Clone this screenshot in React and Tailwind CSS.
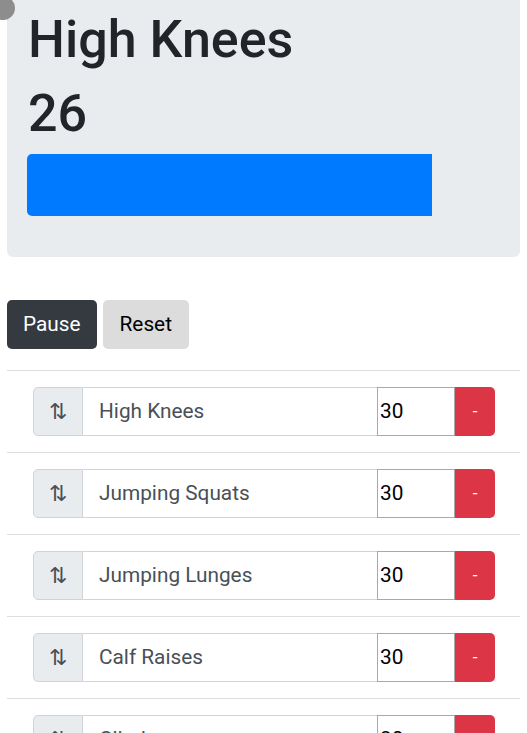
import React, { useState } from "react";

const exercises = [
  { name: "High Knees", secs: 30 },
  { name: "Jumping Squats", secs: 30 },
  { name: "Jumping Lunges", secs: 30 },
  { name: "Calf Raises", secs: 30 },
  { name: "Climbers", secs: 30 },
];

const App = () => {
  const [remaining] = useState(26);
  const total = 30;

  return (
    <div className="relative min-h-screen bg-white font-['Roboto',sans-serif] text-[#212529] overflow-hidden">
      {/* grey dot sitting over the corner */}
      <div className="absolute left-[-9px] top-[-4px] w-[24px] h-[24px] rounded-full bg-[#8d8d8d] z-10" />

      <div className="px-[7px]">
        <div className="bg-[#e9ecef] rounded-b-[6px] pl-[20px] pr-[26px] pt-[9px] pb-[41px]">
          <h1 className="text-[52px] leading-[62px] font-medium mb-[12px] ml-[1px]">
            High Knees
          </h1>
          <h1 className="text-[52px] leading-[62px] font-medium mb-[9px] ml-[1px]">
            {remaining}
          </h1>
          <div className="h-[62px] rounded-[5px] overflow-hidden flex">
            <div
              className="h-full bg-[#007bff]"
              style={{ width: `${(remaining / total) * 100}%` }}
            />
          </div>
        </div>

        <div className="mt-[43px] flex gap-[6px]">
          <button className="h-[49px] px-[16px] rounded-[5px] bg-[#343a40] text-white text-[20.8px]">
            Pause
          </button>
          <button className="h-[49px] px-[17px] rounded-[5px] bg-[#dcdcdc] text-black text-[20.8px]">
            Reset
          </button>
        </div>

        <ul className="mt-[21px]">
          {exercises.map((ex) => (
            <li
              key={ex.name}
              className="border-t border-[#dedede] pt-[16px] pb-[16px] pl-[26px] pr-[25px]"
            >
              <div className="flex h-[49px]">
                <div className="w-[50px] flex items-center justify-center bg-[#e9ecef] border border-[#ced4da] rounded-l-[5px] text-[#495057] text-[22px] font-medium">
                  ⇅
                </div>
                <div className="flex-1 flex items-center border-y border-[#ced4da] px-[16px] text-[20.8px] text-[#495057]">
                  {ex.name}
                </div>
                <input
                  type="number"
                  defaultValue={ex.secs}
                  className="w-[78px] border border-[#a9a9a9] px-[2px] text-[20.8px] text-black outline-none"
                />
                <button className="w-[40px] bg-[#dc3545] text-white rounded-r-[5px] text-[17px]">
                  -
                </button>
              </div>
            </li>
          ))}
        </ul>
      </div>
    </div>
  );
};

export default App;
